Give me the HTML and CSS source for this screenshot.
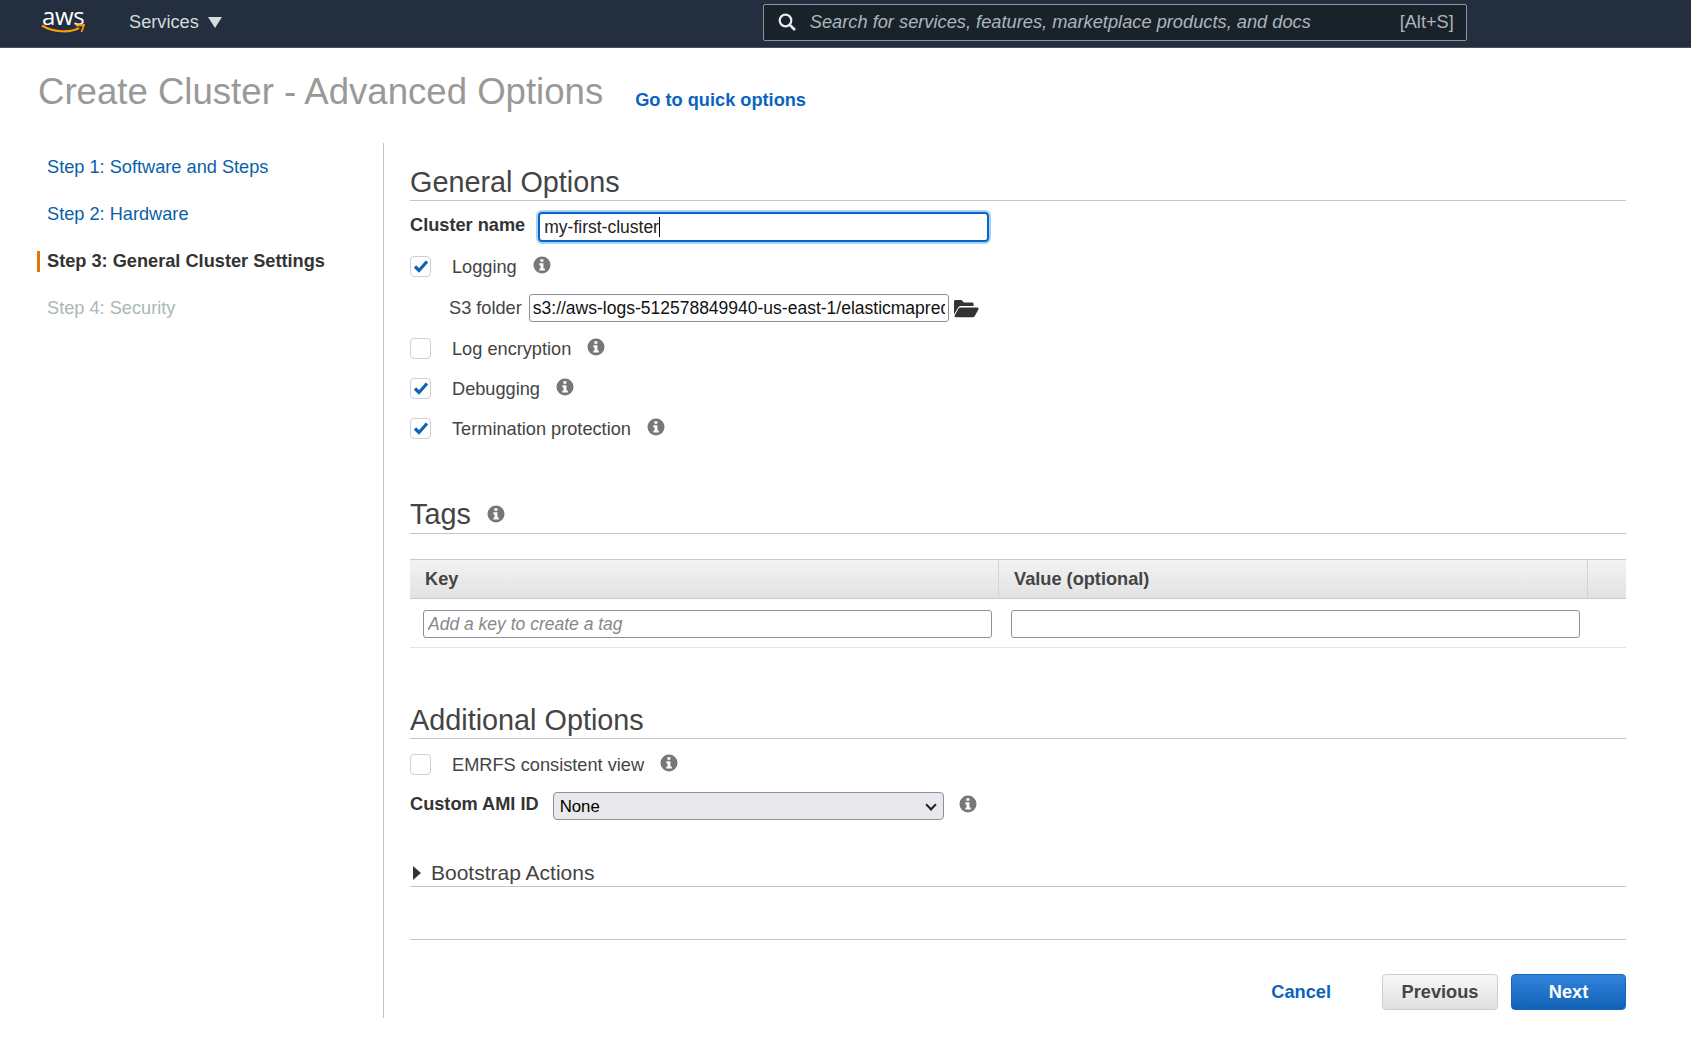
FILE: index.html
```html
<!DOCTYPE html>
<html lang="en">
<head>
    <meta charset="UTF-8">
    <title>Create Cluster - Advanced Options</title>
    <link rel="stylesheet" href="styles.css">
</head>
<body>

    <header class="topbar">
        <div class="logo">
            <span class="logo-text">aws</span>
            <svg class="logo-smile" viewBox="0 0 44 10" width="44" height="10">
                <path d="M1 1.5C12 8.5 29 9 38 4" fill="none" stroke="#f90" stroke-width="2.2"/>
                <path d="M35 1.5L43 1L40.5 8" fill="none" stroke="#f90" stroke-width="1.8"/>
            </svg>
        </div>
        <div class="services">Services <span class="caret"></span></div>
        <div class="search">
            <svg class="search-icon" viewBox="0 0 18 18" width="18" height="18">
                <circle cx="7.5" cy="7.5" r="5.8" fill="none" stroke="#eaeded" stroke-width="2.2"/>
                <path d="M11.8 11.8L17 17" stroke="#eaeded" stroke-width="2.6"/>
            </svg>
            <span class="search-hint">Search for services, features, marketplace products, and docs</span>
            <span class="search-key">[Alt+S]</span>
        </div>
    </header>

    <div class="title-row">
        <h1>Create Cluster - Advanced Options</h1>
        <a class="quick-link" href="#">Go to quick options</a>
    </div>

    <div class="content">
        <nav class="steps">
            <a class="step" href="#">Step 1: Software and Steps</a>
            <a class="step" href="#">Step 2: Hardware</a>
            <a class="step step-active" href="#">Step 3: General Cluster Settings</a>
            <a class="step step-off" href="#">Step 4: Security</a>
        </nav>

        <main class="main">
            <h2 class="section-title first">General Options</h2>

            <div class="name-row">
                <label class="strong-label name-label">Cluster name</label>
                <div class="name-input">my-first-cluster<span class="cursor"></span></div>
            </div>

            <div class="check-row">
                <span class="check on"><svg viewBox="0 0 16 14" width="16" height="14"><path d="M2 7.5L6 11.5L14 2.5" fill="none" stroke="#0f62b8" stroke-width="3.2"/></svg></span>
                <span class="check-label">Logging</span>
                <svg class="info" viewBox="0 0 18 18" width="18" height="18"><circle cx="9" cy="9" r="8.5" fill="#777"/><path d="M7.4 3.2h3v2.6h-3zM6.4 7.2h4v5.2h1.4v2.2H6.4v-2.2h1.2V9.4H6.4z" fill="#fff"/></svg>
            </div>

            <div class="s3-row">
                <label class="s3-label">S3 folder</label>
                <input class="s3-input" type="text" value="s3://aws-logs-512578849940-us-east-1/elasticmapreduce/">
                <svg class="folder" viewBox="0 0 26 19" width="26" height="19"><path d="M1 2.5C1 1.5 1.7 1 2.5 1h6l2.5 2.5h8c1 0 1.6.6 1.6 1.5v2H8C6.6 7 5.6 7.6 5 8.8L1 15.5z" fill="#333"/><path d="M7.6 8.4h16.6c1.2 0 1.8 1 1.2 2l-3.6 6.6c-.5.9-1.2 1.3-2.2 1.3H3c-1.2 0-1.8-1-1.2-2l3.6-6.6c.5-.9 1.2-1.3 2.2-1.3z" fill="#333"/></svg>
            </div>

            <div class="check-row">
                <span class="check"></span>
                <span class="check-label">Log encryption</span>
                <svg class="info" viewBox="0 0 18 18" width="18" height="18"><circle cx="9" cy="9" r="8.5" fill="#777"/><path d="M7.4 3.2h3v2.6h-3zM6.4 7.2h4v5.2h1.4v2.2H6.4v-2.2h1.2V9.4H6.4z" fill="#fff"/></svg>
            </div>

            <div class="check-row">
                <span class="check on"><svg viewBox="0 0 16 14" width="16" height="14"><path d="M2 7.5L6 11.5L14 2.5" fill="none" stroke="#0f62b8" stroke-width="3.2"/></svg></span>
                <span class="check-label">Debugging</span>
                <svg class="info" viewBox="0 0 18 18" width="18" height="18"><circle cx="9" cy="9" r="8.5" fill="#777"/><path d="M7.4 3.2h3v2.6h-3zM6.4 7.2h4v5.2h1.4v2.2H6.4v-2.2h1.2V9.4H6.4z" fill="#fff"/></svg>
            </div>

            <div class="check-row">
                <span class="check on"><svg viewBox="0 0 16 14" width="16" height="14"><path d="M2 7.5L6 11.5L14 2.5" fill="none" stroke="#0f62b8" stroke-width="3.2"/></svg></span>
                <span class="check-label">Termination protection</span>
                <svg class="info" viewBox="0 0 18 18" width="18" height="18"><circle cx="9" cy="9" r="8.5" fill="#777"/><path d="M7.4 3.2h3v2.6h-3zM6.4 7.2h4v5.2h1.4v2.2H6.4v-2.2h1.2V9.4H6.4z" fill="#fff"/></svg>
            </div>

            <h2 class="section-title tags-title">Tags
                <svg class="info" viewBox="0 0 18 18" width="18" height="18"><circle cx="9" cy="9" r="8.5" fill="#777"/><path d="M7.4 3.2h3v2.6h-3zM6.4 7.2h4v5.2h1.4v2.2H6.4v-2.2h1.2V9.4H6.4z" fill="#fff"/></svg>
            </h2>

            <div class="tag-table">
                <div class="tag-head">
                    <div class="tag-col">Key</div>
                    <div class="tag-col">Value (optional)</div>
                    <div class="tag-col"></div>
                </div>
                <div class="tag-row">
                    <input class="tag-input" type="text" placeholder="Add a key to create a tag">
                    <input class="tag-input" type="text">
                </div>
            </div>

            <h2 class="section-title extra-title">Additional Options</h2>

            <div class="check-row emrfs-row">
                <span class="check"></span>
                <span class="check-label">EMRFS consistent view</span>
                <svg class="info" viewBox="0 0 18 18" width="18" height="18"><circle cx="9" cy="9" r="8.5" fill="#777"/><path d="M7.4 3.2h3v2.6h-3zM6.4 7.2h4v5.2h1.4v2.2H6.4v-2.2h1.2V9.4H6.4z" fill="#fff"/></svg>
            </div>

            <div class="ami-row">
                <label class="strong-label ami-label">Custom AMI ID</label>
                <div class="select-wrap">
                    <select class="ami-select"><option>None</option></select>
                </div>
                <svg class="info" viewBox="0 0 18 18" width="18" height="18"><circle cx="9" cy="9" r="8.5" fill="#777"/><path d="M7.4 3.2h3v2.6h-3zM6.4 7.2h4v5.2h1.4v2.2H6.4v-2.2h1.2V9.4H6.4z" fill="#fff"/></svg>
            </div>

            <div class="bootstrap"><span class="arrow"></span>Bootstrap Actions</div>

            <div class="actions">
                <a class="cancel" href="#">Cancel</a>
                <button class="btn">Previous</button>
                <button class="btn btn-primary">Next</button>
            </div>
        </main>
    </div>

</body>
</html>
```

FILE: styles.css
```css
body {
    margin: 0;
    font-family: "Liberation Sans", Arial, sans-serif;
    font-size: 18.2px;
    color: #444;
    background-color: #fff;
}
a {
    text-decoration: none;
}

/* top bar */
.topbar {
    display: flex;
    align-items: center;
    height: 47px;
    background-color: #232f3e;
    border-bottom: 1px solid #49535f;
}
.logo {
    width: 44px;
    height: 47px;
    margin-left: 41px;
    position: relative;
}
.logo-text {
    position: absolute;
    left: 1px;
    top: -1px;
    color: #fff;
    font-family: "Open Sans", sans-serif;
    font-size: 24px;
    letter-spacing: -0.3px;
}
.logo-smile {
    position: absolute;
    left: 0;
    top: 24px;
}
.services {
    margin-left: 44px;
    margin-top: -2px;
    color: #d5dbdb;
    display: flex;
    align-items: center;
}
.caret {
    margin-left: 9px;
    border-left: 7px solid transparent;
    border-right: 7px solid transparent;
    border-top: 11px solid #d5dbdb;
}
.search {
    display: flex;
    align-items: center;
    width: 704px;
    height: 37px;
    margin-left: 541px;
    margin-top: -3px;
    padding: 0 12px 0 14px;
    box-sizing: border-box;
    background-color: #19212b;
    border: 1px solid #8d949c;
    border-radius: 2px;
    color: #aab7b8;
}
.search-icon {
    margin-right: 14px;
}
.search-hint {
    flex: 1;
    font-style: italic;
    font-size: 18.25px;
}

/* page title */
.title-row {
    display: flex;
    align-items: flex-start;
    padding: 23px 0 0 38px;
    height: 72px;
}
h1 {
    margin: 0;
    font-size: 36.6px;
    font-weight: normal;
    color: #999;
}
.quick-link {
    margin-left: 32px;
    margin-top: 19px;
    font-weight: bold;
    color: #0a63bd;
}

/* steps + main */
.content {
    display: flex;
}
.steps {
    width: 383px;
    height: 861px;
    border-right: 1px solid #c4c4c4;
    padding-top: 14px;
}
.step {
    display: block;
    height: 21px;
    line-height: 21px;
    margin-bottom: 26px;
    padding-left: 47px;
    color: #0a5fa8;
}
.step-active {
    margin-left: 37px;
    padding-left: 7px;
    border-left: 3px solid #e7730d;
    font-weight: bold;
    color: #333;
}
.step-off {
    color: #aab7b8;
}
.main {
    width: 1216px;
    margin-left: 26px;
}

/* section headings */
.section-title {
    margin: 0;
    font-size: 28.8px;
    font-weight: normal;
    line-height: 36px;
    color: #444;
    border-bottom: 1px solid #c4c4c4;
}
.first {
    padding-top: 21px;
}
.tags-title {
    margin-top: 48px;
    padding-bottom: 1px;
    display: flex;
    align-items: center;
}
.tags-title .info {
    margin-left: 16px;
}
.extra-title {
    margin-top: 54px;
}

/* form rows */
.name-row {
    display: flex;
    align-items: center;
    height: 38px;
    margin-top: 7px;
}
.strong-label {
    font-weight: bold;
    color: #333;
}
.name-label {
    margin-top: -4px;
}
.ami-label {
    margin-top: -2px;
}
.name-input {
    display: flex;
    align-items: center;
    width: 443px;
    height: 26px;
    margin-left: 13px;
    padding-left: 4px;
    border: 2px solid #0d64c8;
    border-radius: 4px;
    box-shadow: 0 0 0 2px #a8d4f5;
    font-size: 17.5px;
    color: #222;
}
.cursor {
    width: 1px;
    height: 20px;
    background-color: #000;
}
.check-row {
    display: flex;
    align-items: center;
    height: 40px;
}
.check {
    display: flex;
    align-items: center;
    justify-content: center;
    width: 19px;
    height: 19px;
    border: 1px solid #d0d0d0;
    border-radius: 4px;
}
.check-label {
    margin-left: 21px;
    margin-top: 2px;
}
.check-row .info {
    margin-left: 16px;
    margin-top: -2px;
}
.s3-row {
    display: flex;
    align-items: center;
    height: 40px;
    margin-top: 2px;
    padding-left: 39px;
}
.s3-label {
    margin-right: 7px;
}
.s3-input {
    width: 420px;
    height: 28px;
    padding: 0 3px;
    box-sizing: border-box;
    border: 1px solid #8f8f9d;
    border-radius: 3px;
    font-family: inherit;
    font-size: 17.5px;
    color: #111;
}
.folder {
    margin-left: 4px;
}

/* tags table */
.tag-table {
    margin-top: 25px;
}
.tag-head {
    display: grid;
    grid-template-columns: 589px 589px 38px;
    height: 38px;
    background: linear-gradient(#f3f3f3, #e2e2e2);
    border-top: 1px solid #c9c9c9;
    border-bottom: 1px solid #c9c9c9;
}
.tag-col {
    padding-left: 15px;
    line-height: 38px;
    font-weight: bold;
    color: #444;
    border-right: 1px solid #d4d4d4;
}
.tag-col:last-child {
    border-right: none;
}
.tag-row {
    display: flex;
    height: 49px;
    padding-left: 13px;
    padding-top: 2px;
    box-sizing: border-box;
    align-items: center;
    gap: 19px;
    border-bottom: 1px solid #e4e4e4;
}
.tag-input {
    width: 569px;
    height: 28px;
    padding: 0 4px;
    box-sizing: border-box;
    border: 1px solid #8f8f9d;
    border-radius: 3px;
    font-family: inherit;
    font-size: 17.5px;
}
.tag-input::placeholder {
    font-style: italic;
    color: #888;
}
.emrfs-row {
    margin-top: 5px;
}
.ami-row {
    display: flex;
    align-items: center;
    height: 40px;
    margin-top: 1px;
}
.select-wrap {
    position: relative;
    margin-left: 14px;
    margin-top: 2px;
}
.select-wrap::after {
    content: "";
    position: absolute;
    right: 9px;
    top: 9px;
    width: 6px;
    height: 6px;
    border-right: 2px solid #222;
    border-bottom: 2px solid #222;
    transform: rotate(45deg);
    pointer-events: none;
}
.ami-select {
    display: block;
    width: 391px;
    height: 28px;
    padding: 0 6px;
    appearance: none;
    background-color: #e9e9ed;
    border: 1px solid #8f8f9d;
    border-radius: 4px;
    font-family: inherit;
    font-size: 16.8px;
    color: #000;
}
.ami-row .info {
    margin-left: 15px;
    margin-top: -3px;
}
.bootstrap {
    display: flex;
    align-items: center;
    margin-top: 35px;
    height: 26px;
    font-size: 21px;
    color: #444;
    border-bottom: 1px solid #c4c4c4;
}
.arrow {
    margin-left: 3px;
    margin-right: 10px;
    border-top: 7px solid transparent;
    border-bottom: 7px solid transparent;
    border-left: 8px solid #333;
}

/* footer buttons */
.actions {
    display: flex;
    align-items: center;
    justify-content: flex-end;
    margin-top: 52px;
    padding-top: 34px;
    border-top: 1px solid #c4c4c4;
}
.cancel {
    margin-right: 51px;
    font-weight: bold;
    color: #0a63bd;
}
.btn {
    width: 116px;
    height: 36px;
    border: 1px solid #ccc;
    border-radius: 4px;
    background: linear-gradient(#f8f8f8, #e0e0e0);
    font-family: inherit;
    font-size: 18.2px;
    font-weight: bold;
    color: #444;
}
.btn-primary {
    width: 115px;
    margin-left: 13px;
    border: 1px solid #1366b8;
    background: linear-gradient(#3183dc, #1263b7);
    color: #fff;
}
```
